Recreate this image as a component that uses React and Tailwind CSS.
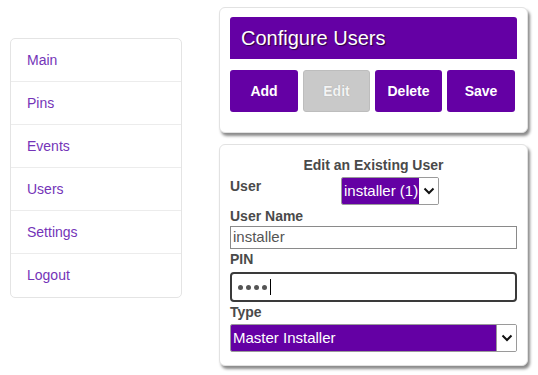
import React from "react";

const navItems = ["Main", "Pins", "Events", "Users", "Settings", "Logout"];

const Chevron = () => (
  <svg width="12" height="8" viewBox="0 0 12 8" fill="none">
    <path d="M1.5 1.5 L6 6 L10.5 1.5" stroke="#111" strokeWidth="2" />
  </svg>
);

const App = () => {
  return (
    <div
      className="w-[538px] h-[375px] bg-white flex overflow-hidden"
      style={{ fontFamily: '"Liberation Sans", Arial, sans-serif' }}
    >
      {/* Side navigation */}
      <div className="pl-[10px] pt-[38px] w-[219px] shrink-0">
        <div className="w-[172px] border border-[#e4e4e4] rounded-[5px] bg-white">
          {navItems.map((item, i) => (
            <div
              key={item}
              className={`h-[43px] flex items-center pl-[16px] text-[14px] text-[#7434b8] ${
                i < navItems.length - 1 ? "border-b border-[#ececec]" : ""
              }`}
            >
              {item}
            </div>
          ))}
        </div>
      </div>

      {/* Main column */}
      <div className="pt-[7px] w-[309px] flex flex-col gap-[11px]">
        <div className="bg-white border border-[#e2e2e2] rounded-[6px] shadow-[2px_3px_3px_#8a8a8a] px-[10px] pt-[9px] pb-[20px]">
          <div className="h-[42px] bg-[#6400a4] rounded-t-[3px] flex items-center pl-[11px] text-white text-[20px] [text-shadow:1px_1px_1px_#2a0040]">
            Configure Users
          </div>
          <div className="mt-[11px] flex gap-[5px]">
            <button className="w-[68px] h-[42px] rounded-[3px] bg-[#6400a4] text-white font-bold text-[14px]">
              Add
            </button>
            <button className="w-[67px] h-[42px] rounded-[3px] bg-[#c9c9c9] border border-[#bdbdbd] text-[#f4f4f4] font-bold text-[14px] [text-shadow:0_0_1px_#999]">
              Edit
            </button>
            <button className="w-[67px] h-[42px] rounded-[3px] bg-[#6400a4] text-white font-bold text-[14px]">
              Delete
            </button>
            <button className="w-[68px] h-[42px] rounded-[3px] bg-[#6400a4] text-white font-bold text-[14px]">
              Save
            </button>
          </div>
        </div>

        <div className="bg-white border border-[#e2e2e2] rounded-[6px] shadow-[2px_3px_3px_#8a8a8a] px-[10px] pt-[12px] pb-[13px] text-[#4a4a4a]">
          <div className="text-center font-bold text-[14px] leading-[16px]">
            Edit an Existing User
          </div>
          <div className="flex items-start">
            <div className="w-[111px] font-bold text-[14px] leading-[16px] mt-[5px]">
              User
            </div>
            <div className="mt-[4px] h-[28px] w-[98px] flex border border-[#9a9a9a] rounded-[2px] overflow-hidden">
              <div className="flex-1 bg-[#6400a4] text-white text-[15px] whitespace-nowrap flex items-center pl-[2px] overflow-hidden">
                installer (1)
              </div>
              <div className="w-[19px] shrink-0 bg-white flex items-center justify-center">
                <Chevron />
              </div>
            </div>
          </div>
          <div className="mt-[3px] font-bold text-[14px] leading-[16px]">User Name</div>
          <div className="mt-[2px] h-[23px] border border-[#8a8a8a] flex items-center pl-[2px] text-[15px] text-[#555]">
            installer
          </div>
          <div className="mt-[2px] font-bold text-[14px] leading-[16px]">PIN</div>
          <div className="mt-[5px] h-[30px] border-2 border-[#3a3a3a] rounded-[4px] flex items-center pl-[6px]">
            <div className="flex gap-[3px]">
              {[0, 1, 2, 3].map((d) => (
                <span key={d} className="w-[5px] h-[5px] rounded-full bg-[#555]" />
              ))}
            </div>
            <span className="ml-[3px] w-[1px] h-[16px] bg-black" />
          </div>
          <div className="mt-[2px] font-bold text-[14px] leading-[16px]">Type</div>
          <div className="mt-[4px] h-[28px] flex border border-[#9a9a9a] rounded-[2px] overflow-hidden">
            <div className="flex-1 bg-[#6400a4] text-white text-[15px] flex items-center pl-[2px]">
              Master Installer
            </div>
            <div className="w-[20px] bg-white border-l border-[#9a9a9a] flex items-center justify-center">
              <Chevron />
            </div>
          </div>
        </div>
      </div>
    </div>
  );
};

export default App;
